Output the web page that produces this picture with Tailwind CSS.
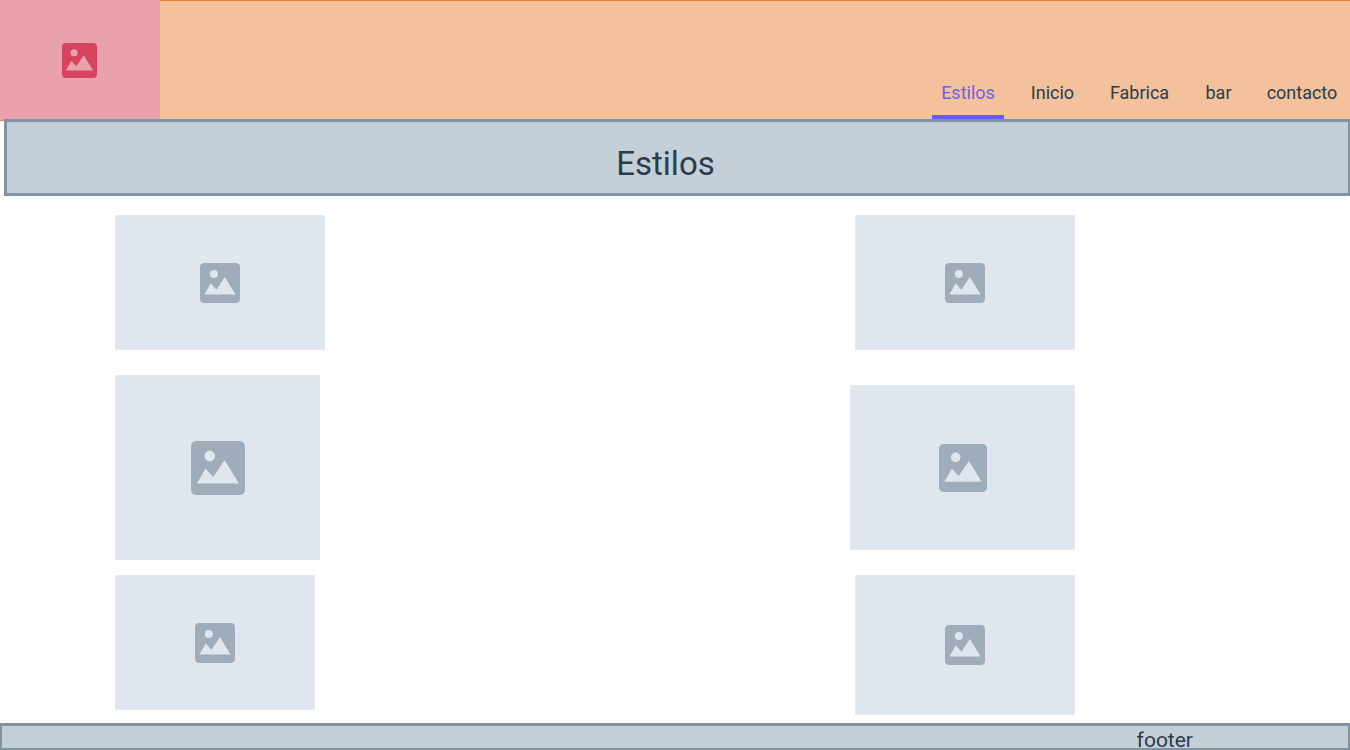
<!DOCTYPE html>
<html lang="es">
<head>
<meta charset="utf-8">
<meta name="viewport" content="width=device-width, initial-scale=1">
<title>Estilos</title>
<script src="https://cdn.jsdelivr.net/npm/@tailwindcss/browser@4"></script>
</head>
<body class="flex min-h-screen flex-col bg-white font-['Roboto',sans-serif] text-[#2b3c4b]">
<svg class="hidden" aria-hidden="true">
  <symbol id="picture" viewBox="0 0 54 54">
    <path fill="currentColor" fill-rule="evenodd" d="M6 0H48Q54 0 54 6V48Q54 54 48 54H6Q0 54 0 48V6Q0 0 6 0ZM18.7 9.6A5.4 5.4 0 1 0 18.7 20.4A5.4 5.4 0 1 0 18.7 9.6ZM6 42.5H48L33.6 19L22.2 36L14.5 27.5Z"/>
  </symbol>
</svg>

<header class="flex h-[121px] justify-between border-y border-[#e8833a] bg-[#f4c19d]">
  <a href="#" aria-label="Logo" class="-mt-px flex w-40 items-center justify-center border-r border-[#eaa897] bg-[#e9a2ad] text-[#d6455d]">
    <svg class="size-[35px]"><use href="#picture"/></svg>
  </a>
  <nav class="mr-[5px] flex items-end gap-[18px] text-center text-[18px] leading-6">
    <a href="#" aria-current="page" class="w-[72px] border-b-[5px] border-[#6759ee] pb-[10px] text-[#6f60e6]">Estilos</a>
    <a href="#" class="w-[61px] pb-[15px]">Inicio</a>
    <a href="#" class="w-[77px] pb-[15px]">Fabrica</a>
    <a href="#" class="w-[45px] pb-[15px]">bar</a>
    <a href="#" class="w-[86px] pb-[15px]">contacto</a>
  </nav>
</header>

<div class="relative -mt-[2px] ml-1 flex h-[77px] items-center justify-center border-[3px] border-r-2 border-[#8093a0] bg-[#c4cfd8] pt-3 pr-6">
  <h1 class="text-[33px] leading-10">Estilos</h1>
</div>

<main class="flex grow justify-between pt-[19px] pr-[275px] pb-2 pl-[115px] text-[#9eadb9]">
  <div class="flex flex-col items-start">
    <div class="flex h-[135px] w-[210px] items-center justify-center border border-[#e5eaf0] bg-[#dfe6ed]"><svg class="size-10"><use href="#picture"/></svg></div>
    <div class="mt-[25px] flex h-[185px] w-[205px] items-center justify-center border border-[#e5eaf0] bg-[#dfe6ed]"><svg class="size-[54px]"><use href="#picture"/></svg></div>
    <div class="mt-[15px] flex h-[135px] w-[200px] items-center justify-center border border-[#e5eaf0] bg-[#dfe6ed]"><svg class="size-10"><use href="#picture"/></svg></div>
  </div>
  <div class="flex flex-col items-end">
    <div class="flex h-[135px] w-[220px] items-center justify-center border border-[#e5eaf0] bg-[#dfe6ed]"><svg class="size-10"><use href="#picture"/></svg></div>
    <div class="mt-[35px] flex h-[165px] w-[225px] items-center justify-center border border-[#e5eaf0] bg-[#dfe6ed]"><svg class="size-12"><use href="#picture"/></svg></div>
    <div class="mt-[25px] flex h-[140px] w-[220px] items-center justify-center border border-[#e5eaf0] bg-[#dfe6ed]"><svg class="size-10"><use href="#picture"/></svg></div>
  </div>
</main>

<footer class="flex h-[27px] justify-end border-2 border-t-[3px] border-[#8093a0] bg-[#c4cfd8] pr-[155px]">
  <p class="text-[21px] leading-7">footer</p>
</footer>
</body>
</html>
